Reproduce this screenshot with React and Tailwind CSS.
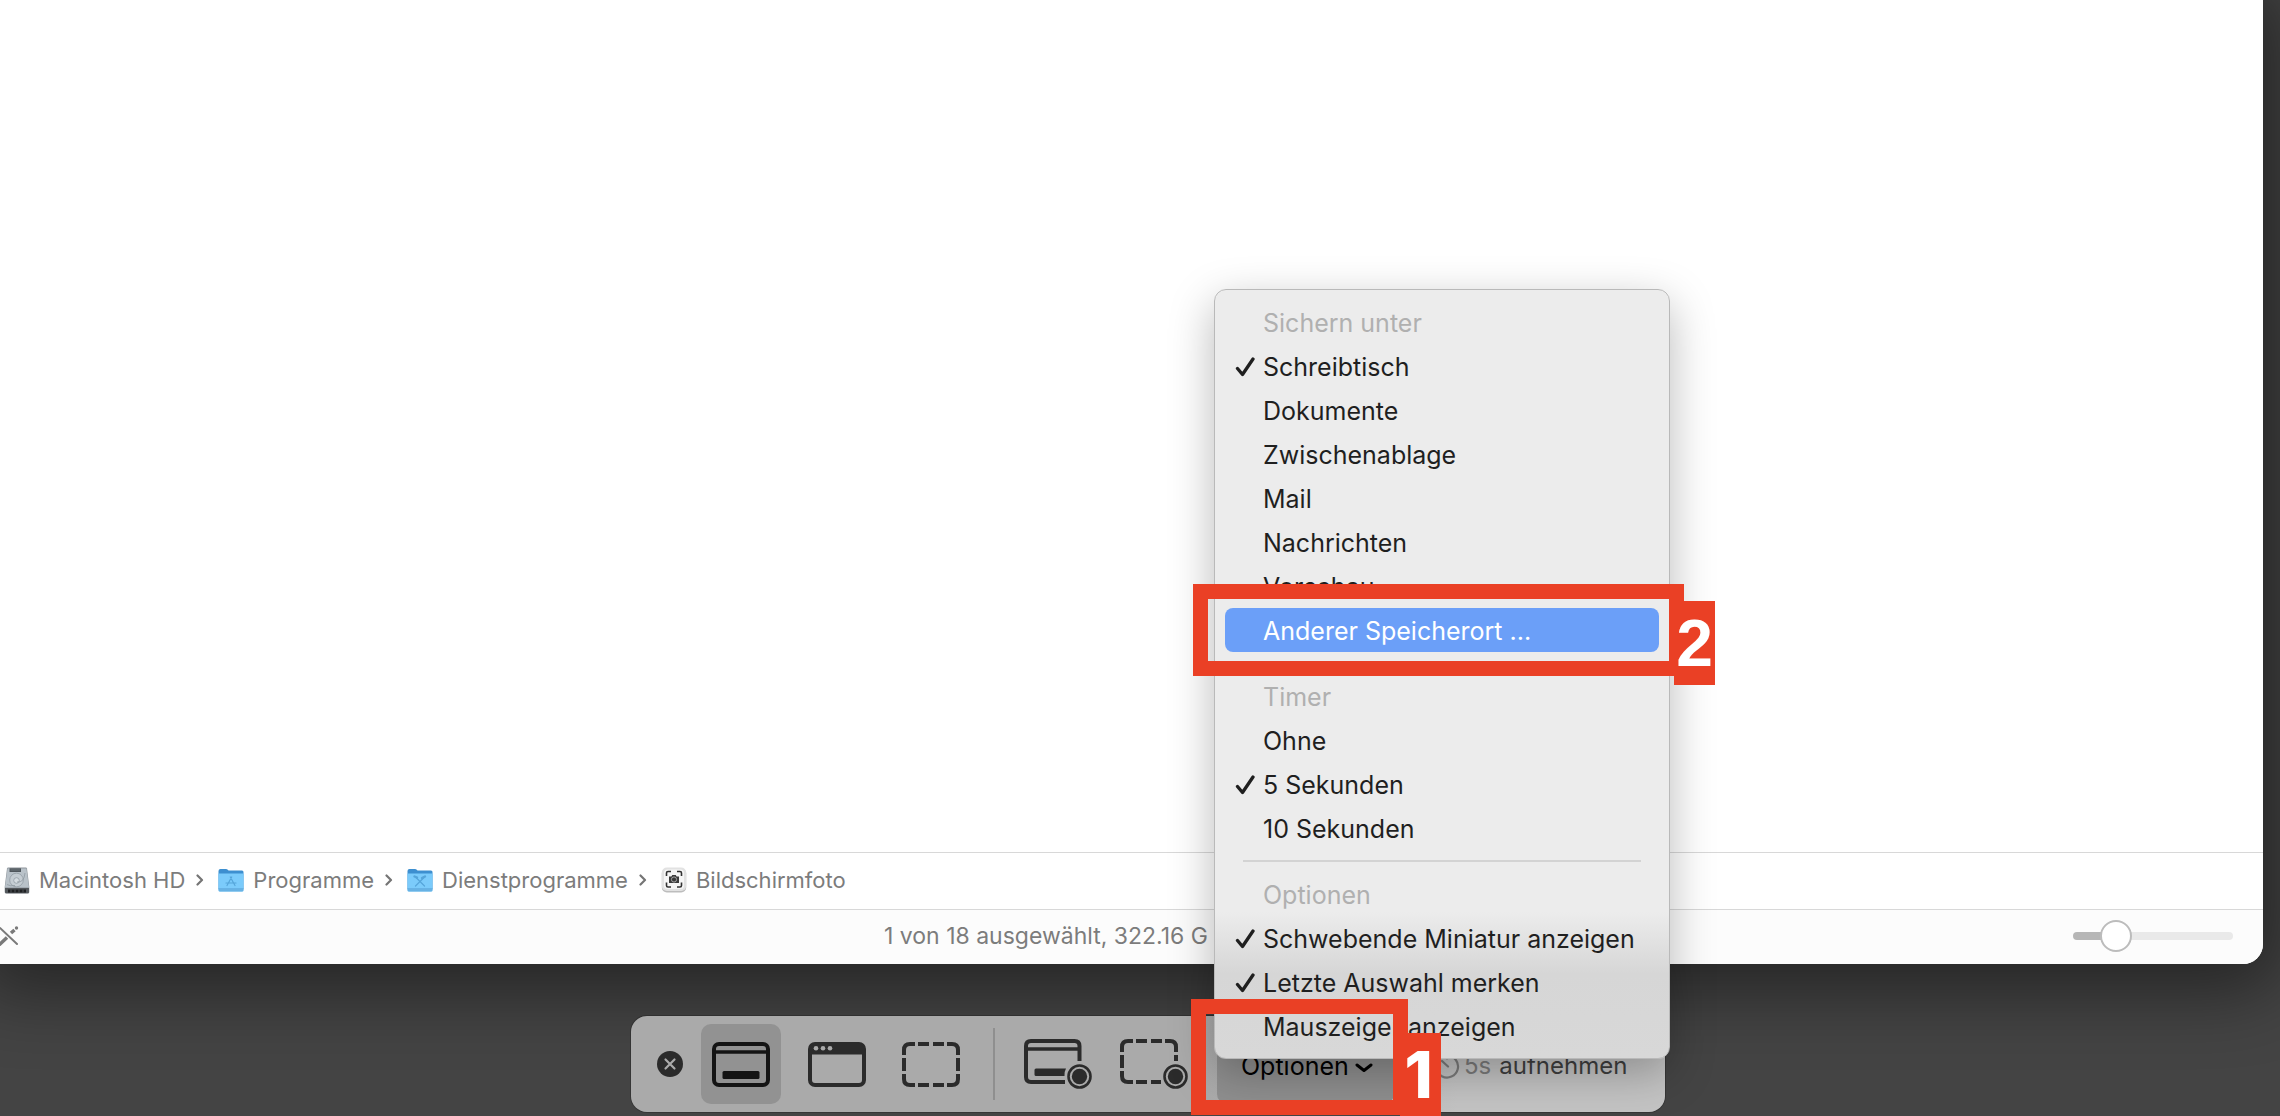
import clsx from 'clsx';

const menuGroups = [
  {
    title: 'Sichern unter',
    items: [
      { label: 'Schreibtisch', checked: true },
      { label: 'Dokumente' },
      { label: 'Zwischenablage' },
      { label: 'Mail' },
      { label: 'Nachrichten' },
      { label: 'Vorschau' },
      { label: 'Anderer Speicherort ...', active: true },
    ],
  },
  {
    title: 'Timer',
    items: [{ label: 'Ohne' }, { label: '5 Sekunden', checked: true }, { label: '10 Sekunden' }],
  },
  {
    title: 'Optionen',
    items: [
      { label: 'Schwebende Miniatur anzeigen', checked: true },
      { label: 'Letzte Auswahl merken', checked: true },
      { label: 'Mauszeiger anzeigen' },
    ],
  },
];

const DiskIcon = () => (
  <svg viewBox="0 0 26 27" className="h-[27px] w-[26px]" aria-hidden="true">
    <path d="M3 1.5Q3.2.5 4.2.5h17.6q1 0 1.2 1L25.3 20v5q0 1.5-1.5 1.5H2.2Q.7 26.500.7 25v-5z" fill="#8d949a" />
    <path d="M3.6 1.5h18.8L25 20.500H1z" fill="#b9c2c9" />
    <rect x="5.500" y="1.300" width="11.500" height="3.700" fill="#4f565c" />
    <path d="M6.500 3h9.500" stroke="#7a8288" strokeWidth=".7" />
    <circle cx="12.500" cy="13" r="6.800" fill="#c5cdd3" stroke="#939da5" strokeWidth=".8" />
    <circle cx="12.500" cy="13.500" r="2.800" fill="#d5dce1" stroke="#929ca4" strokeWidth=".8" />
    <path d="M13 15q7 1 8-9M3 17.500q3 2 8 1" fill="none" stroke="#8f99a1" strokeWidth=".8" />
    <path d="M1 21h24v4q0 1.200-1.200 1.200H2.200Q1 26.200 1 25z" fill="#54585c" />
    <path d="M4 22.500h18v3H4z" fill="#1f2123" />
    <path d="M7 22.500v3M11 22.500v3M15 22.500v3M19 22.500v3" stroke="#5d6266" strokeWidth=".8" />
  </svg>
);

const FolderIcon = ({ children }) => (
  <svg viewBox="0 0 26 25" className="h-[25px] w-[26px]" aria-hidden="true">
    <path d="M.5 3Q.5 1 2.500 1h5.500q1 0 1.800.8l.7.700H24q1.500 0 1.500 1.500v17H.5z" fill="#3d8fd0" />
    <path d="M.5 5.500h25V22q0 1.500-1.500 1.500H2Q.5 23.500.5 22z" fill="#7bcbfb" />
    <path d="M.5 21h25v1q0 1.500-1.500 1.500H2Q.5 23.500.5 22z" fill="#67b2e4" />
    <path d="M.5 20.500h25" stroke="#5fa9dd" strokeWidth=".7" />
    <g fill="none" stroke="#55a5da" strokeWidth="1.200" strokeLinecap="round">
      {children}
    </g>
  </svg>
);

const ScreenshotAppIcon = () => (
  <svg viewBox="0 0 26 26" className="size-[26px]" aria-hidden="true">
    <rect x=".8" y="1.500" width="24.400" height="24" rx="5" fill="#bdbdbd" />
    <rect x=".8" y=".5" width="24.400" height="23.500" rx="5" fill="#e2e2e2" />
    <rect x="3" y="2.500" width="20" height="19.500" rx="3.500" fill="#f6f6f6" />
    <path d="M5.500 9V6q0-1.500 1.500-1.500h3M16 4.500h3q1.500 0 1.500 1.500v3M20.500 15.500v3q0 1.500-1.500 1.500h-3M10 20H7q-1.500 0-1.500-1.500v-3" fill="none" stroke="#333" strokeWidth="1.600" />
    <path d="M8 9.500h2.400l.9-1.500h3.400l.9 1.500H18v6.500H8z" fill="#3a3a3a" />
    <circle cx="13" cy="12.500" r="2.600" fill="#3a3a3a" stroke="#a6a6a6" />
  </svg>
);

const PathChevron = () => (
  <svg viewBox="0 0 8 12" className="h-3 w-2 shrink-0" aria-hidden="true">
    <path d="M1.500 1.500 6 6l-4.500 4.500" fill="none" stroke="#757575" strokeWidth="2.200" strokeLinecap="round" strokeLinejoin="round" />
  </svg>
);

const CheckIcon = () => (
  <svg viewBox="0 0 20 20" className="size-5" aria-hidden="true">
    <path d="m2.500 11.500 5 6L18 2" fill="none" stroke="currentColor" strokeWidth="3.300" strokeLinecap="round" strokeLinejoin="round" />
  </svg>
);

const FullScreenIcon = () => (
  <svg viewBox="0 0 58 45" className="h-[45px] w-[58px]" aria-hidden="true">
    <rect x="2" y="2" width="54" height="41" rx="5" fill="none" stroke="currentColor" strokeWidth="4" />
    <path d="M3 10h52" stroke="currentColor" strokeWidth="3.500" />
    <rect x="10.500" y="29" width="37" height="8" rx="1.500" fill="currentColor" />
  </svg>
);

const WindowIcon = () => (
  <svg viewBox="0 0 58 45" className="h-[45px] w-[58px]" aria-hidden="true">
    <rect x="2" y="2" width="54" height="41" rx="5" fill="none" stroke="currentColor" strokeWidth="4" />
    <path d="M2 3h54v9.500H2z" fill="currentColor" />
    <g fill="#aaa">
      <circle cx="8" cy="6.300" r="2.300" />
      <circle cx="15" cy="6.300" r="2.300" />
      <circle cx="22" cy="6.300" r="2.300" />
    </g>
  </svg>
);

const SelectionIcon = () => (
  <svg viewBox="0 0 58 45" className="h-[45px] w-[58px]" aria-hidden="true">
    <path
      d="M2 13V8q0-6 6-6h5M16 2h11M31 2h11M45 2h5q6 0 6 6v5M56 16v13M56 32v5q0 6-6 6h-5M42 43H31M27 43H16M13 43H8q-6 0-6-6v-5M2 29V16"
      fill="none"
      stroke="currentColor"
      strokeWidth="4"
    />
  </svg>
);

const RecordDot = () => (
  <g>
    <circle cx="55.500" cy="37.500" r="11" fill="none" stroke="currentColor" strokeWidth="2.600" />
    <circle cx="55.500" cy="37.500" r="7.700" fill="currentColor" />
  </g>
);

const RecordScreenIcon = () => (
  <svg viewBox="0 0 68 50" className="h-[50px] w-[68px]" aria-hidden="true">
    <path d="M41 43H7q-5 0-5-5V7q0-5 5-5h43.500q5 0 5 5v15" fill="none" stroke="currentColor" strokeWidth="4" />
    <path d="M3 10h52" stroke="currentColor" strokeWidth="3.500" />
    <path d="M12 29.500h30q-2 3.500-1.500 7.500H12q-1.500 0-1.500-1.500V31q0-1.500 1.500-1.500z" fill="currentColor" />
    <RecordDot />
  </svg>
);

const RecordSelectionIcon = () => (
  <svg viewBox="0 0 68 50" className="h-[50px] w-[68px]" aria-hidden="true">
    <path
      d="M2 13V8q0-6 6-6h5M16 2h11M31 2h11M45 2h5q6 0 6 6v5M56 16v6M41 43H31M27 43H16M13 43H8q-6 0-6-6v-5M2 29V16"
      fill="none"
      stroke="currentColor"
      strokeWidth="4"
    />
    <RecordDot />
  </svg>
);

const TimerIcon = () => (
  <svg viewBox="0 0 26 26" className="size-[26px]" aria-hidden="true">
    <path d="M13 2.500v3M13 2.500a11 11 0 1 1-8 3.500M8 8l6 5.500" fill="none" stroke="currentColor" strokeWidth="2.200" strokeLinecap="round" />
  </svg>
);

const pathItems = [
  { label: 'Macintosh HD', icon: <DiskIcon /> },
  {
    label: 'Programme',
    icon: (
      <FolderIcon>
        <path d="m12.300 9 4.700 8.500M13.700 9 9 17.500M8 15h10" />
      </FolderIcon>
    ),
  },
  {
    label: 'Dienstprogramme',
    icon: (
      <FolderIcon>
        <path d="m8.500 9 9 9M17.500 9l-9 9" />
        <path d="m7.500 8.500 2.500 1M15 10l3-1.500" strokeWidth="2.400" />
      </FolderIcon>
    ),
  },
  { label: 'Bildschirmfoto', icon: <ScreenshotAppIcon /> },
];

const FinderWindow = () => (
  <main className="mr-[17px] flex flex-1 flex-col overflow-hidden rounded-br-[20px] bg-white text-[#7c7c7c] shadow-[0_8px_70px_20px_rgba(0,0,0,0.45)]">
    <div className="flex-1" />
    <nav aria-label="Pfad" className="flex h-[57px] items-center gap-[11px] border-t border-[#d8d8d8] pb-[2px] pl-1 text-[22px] leading-7">
      {pathItems.map((item, i) => (
        <div key={item.label} className="flex items-center gap-[14px]">
          {i > 0 && <PathChevron />}
          <a href="#" className="flex items-center gap-[9px]">
            {item.icon}
            <span>{item.label}</span>
          </a>
        </div>
      ))}
    </nav>
    <footer className="flex h-[55px] items-center justify-between border-t border-[#d8d8d8] bg-[#fcfcfc] pr-[30px] pb-[2px]">
      <svg viewBox="0 0 20 20" className="size-5 shrink-0" aria-hidden="true">
        <path d="M0 2l17 16" stroke="#7a7a7a" strokeWidth="2" strokeLinecap="round" />
        <path d="M-1 19l8-7.500M11 7l3.500-3" stroke="#7a7a7a" strokeWidth="3.500" />
        <circle cx="16.500" cy="2" r="1.700" fill="#7a7a7a" />
      </svg>
      <p className="flex-1 pl-[864px] text-[23px] leading-7 whitespace-nowrap">1 von 18 ausgewählt, 322.16 G</p>
      <input
        type="range"
        aria-label="Symbolgröße"
        defaultValue="21"
        className="h-8 w-40 appearance-none bg-transparent [&::-webkit-slider-runnable-track]:h-2 [&::-webkit-slider-runnable-track]:rounded-full [&::-webkit-slider-runnable-track]:bg-[linear-gradient(to_right,#b6b6b6_27%,#e9e9e9_27%)] [&::-webkit-slider-thumb]:-mt-3 [&::-webkit-slider-thumb]:size-8 [&::-webkit-slider-thumb]:appearance-none [&::-webkit-slider-thumb]:rounded-full [&::-webkit-slider-thumb]:border-2 [&::-webkit-slider-thumb]:border-[#bcbcbc] [&::-webkit-slider-thumb]:bg-white"
      />
    </footer>
  </main>
);

const MenuItem = ({ label, checked, active }) => (
  <button
    type="button"
    role="menuitemcheckbox"
    aria-checked={!!checked}
    className={clsx(
      'flex h-11 w-full items-center rounded-lg pt-px text-left whitespace-nowrap',
      active ? 'bg-[#6b9ff8] text-white' : 'text-[#1f1f1f]'
    )}
  >
    <span className="flex w-[38px] pl-[10px]">{checked && <CheckIcon />}</span>
    {label}
  </button>
);

const OptionsMenu = () => (
  <div
    role="menu"
    className="absolute bottom-[45px] -left-[3px] z-10 w-[456px] rounded-xl border border-[#b9b9b9] bg-[linear-gradient(to_bottom,#ececec_81%,#d6d6d6_89%,#d8d8d8)] px-[10px] py-[10px] text-[25px] leading-8 shadow-[0_14px_45px_rgba(0,0,0,0.28)]"
  >
    {menuGroups.map((group, i) => (
      <div key={group.title}>
        {i > 0 && <hr className="mx-[18px] my-[10px] border-t-2 border-[#d3d3d3]" />}
        <h2 className="flex h-11 items-center pt-px pl-[38px] text-[#b0b0b0]">{group.title}</h2>
        {group.items.map((item) => (
          <MenuItem key={item.label} {...item} />
        ))}
      </div>
    ))}
    {/* step 2 */}
    <div className="absolute top-[294px] -left-[22px] h-[92px] w-[491px] border-[15px] border-[#ea4025]" />
    <div className="absolute top-[311px] left-[459px] flex h-[84px] w-[41px] items-center justify-center bg-[#ea4025] font-['Liberation_Sans',Arial,sans-serif] text-[66px] leading-none font-bold text-white">
      2
    </div>
  </div>
);

const CaptureToolbar = () => (
  <div className="mt-[52px] mb-1 flex justify-center pl-4">
    <div
      role="toolbar"
      className="relative flex h-24 w-[1034px] items-center rounded-2xl bg-[linear-gradient(to_right,#aaa_55%,#c4c4c4_80%)] text-[#2b2b2b] ring-1 ring-black/20"
    >
      <button type="button" aria-label="Schließen" className="ml-[26px] size-[26px]">
        <svg viewBox="0 0 26 26" className="size-[26px]" aria-hidden="true">
          <circle cx="13" cy="13" r="13" fill="currentColor" />
          <path d="m8.500 8.500 9 9M17.500 8.500l-9 9" stroke="#aaa" strokeWidth="2.200" strokeLinecap="round" />
        </svg>
      </button>
      <button type="button" aria-label="Gesamter Bildschirm" className="ml-[18px] flex size-20 items-center justify-center rounded-[10px] bg-[#929292] text-[#141414]">
        <FullScreenIcon />
      </button>
      <button type="button" aria-label="Fenster" className="ml-4 flex size-20 items-center justify-center">
        <WindowIcon />
      </button>
      <button type="button" aria-label="Auswahl" className="ml-[14px] flex size-20 items-center justify-center">
        <SelectionIcon />
      </button>
      <div className="ml-[22px] h-[72px] w-[2px] bg-[#8f8f8f]" />
      <button type="button" aria-label="Bildschirm aufnehmen" className="ml-[23px] flex size-20 items-center justify-center">
        <RecordScreenIcon />
      </button>
      <button type="button" aria-label="Auswahl aufnehmen" className="ml-4 flex size-20 items-center justify-center">
        <RecordSelectionIcon />
      </button>
      <div className="relative ml-[23px]">
        <button type="button" aria-haspopup="menu" className="flex h-20 w-[177px] items-center gap-[6px] rounded-[10px] bg-[#8f8f8f] pt-[3px] pl-6 text-[25px] leading-8 text-black">
          Optionen
          <svg viewBox="0 0 18 12" className="mt-1 h-3 w-[18px]" aria-hidden="true">
            <path d="m2 3 7 5.500L16 3" fill="none" stroke="currentColor" strokeWidth="3" strokeLinecap="round" strokeLinejoin="round" />
          </svg>
        </button>
        <OptionsMenu />
      </div>
      <button type="button" className="ml-10 flex h-20 items-center gap-1 pt-[3px] text-2xl whitespace-nowrap text-[#3f3f3f]">
        <span className="flex items-center gap-1 text-[#7c7c7c]">
          <TimerIcon />
          5s
        </span>
        <span className="ml-1">aufnehmen</span>
      </button>
      {/* step 1 */}
      <div className="absolute -top-[17px] left-[560px] z-20 h-[116px] w-[217px] border-[15px] border-[#ea4025]" />
      <div className="absolute top-[17px] left-[769px] z-20 flex h-[83px] w-[41px] items-center justify-center bg-[#ea4025] pr-1 text-[64px] leading-none font-extrabold text-white">
        1
      </div>
    </div>
  </div>
);

export default function App() {
  return (
    <div className="flex min-h-screen flex-col overflow-hidden bg-[#444] font-[Inter,'Liberation_Sans',sans-serif]">
      <FinderWindow />
      <CaptureToolbar />
    </div>
  );
}
